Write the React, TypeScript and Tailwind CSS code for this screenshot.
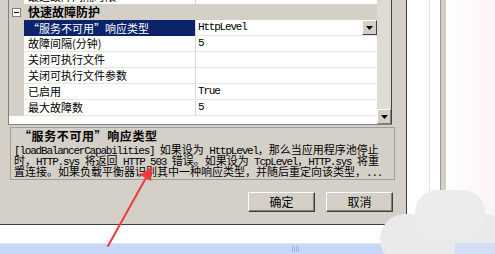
const cjk = "font-['Noto_Sans_CJK_SC',sans-serif]";

const A = ({ children }: { children: React.ReactNode }) => (
    <span className="font-['Liberation_Mono',monospace] tracking-[-1.2px] whitespace-pre">{children}</span>
);

const properties = [
    { id: 1, name: "“服务不可用”响应类型", value: "HttpLevel", selected: true },
    { id: 2, name: "故障间隔(分钟)", value: "5" },
    { id: 3, name: "关闭可执行文件", value: "" },
    { id: 4, name: "关闭可执行文件参数", value: "" },
    { id: 5, name: "已启用", value: "True" },
    { id: 6, name: "最大故障数", value: "5" },
];

const Arrow = () => (
    <svg width="7" height="4" viewBox="0 0 7 4">
        <path d="M0 0 L7 0 L3.5 4 Z" fill="#000" />
    </svg>
);

const Button = ({ label }: { label: string }) => (
    <div className="w-[67px] h-[20px] flex items-center justify-center bg-[#d4d0c8] border border-t-white border-l-white border-r-[#404040] border-b-[#404040] shadow-[inset_-1px_-1px_0_#808080] text-[12px]">
        {label}
    </div>
);

const PropertyGrid = () => (
    <div className="flex w-[384px] h-[125px] border-l border-b border-[#808080] bg-white">
        <div className="flex flex-col w-[369px]">
            {/* row above, mostly scrolled away */}
            <div className="h-[4px] overflow-hidden flex">
                <div className="w-[15px] bg-[#d4d0c8]" />
                <div className="w-[172px] border-r border-[#d8d8d8] overflow-hidden">
                    <div className="mt-[-11px] pl-[4px] leading-[15px]">最近故障间隔时限</div>
                </div>
            </div>
            <div className="h-[16px] flex items-center bg-[#d4d0c8]">
                <div className="w-[15px] flex justify-center">
                    <div className="w-[9px] h-[9px] border border-[#808080] bg-white flex items-center justify-center">
                        <div className="w-[5px] h-[1px] bg-black" />
                    </div>
                </div>
                <span className="ml-[4px] text-[12px] font-bold leading-none">快速故障防护</span>
            </div>
            {properties.map((p) => (
                <div key={p.id} className="h-[16px] flex">
                    <div className="w-[15px] bg-[#d4d0c8]" />
                    <div
                        className={`w-[172px] flex items-center pl-[4px] border-r border-[#d8d8d8] ${
                            p.selected ? "bg-[#0a246a] text-white" : "border-b border-b-[#e4e4e4]"
                        }`}
                    >
                        {p.name}
                    </div>
                    <div className="flex-1 flex items-center pl-[2px] border-b border-[#e4e4e4]">
                        <A>{p.value}</A>
                        {p.selected && (
                            <div className="ml-auto w-[15px] h-[15px] flex items-center justify-center bg-[#d4d0c8] border border-t-white border-l-white border-r-[#404040] border-b-[#404040]">
                                <Arrow />
                            </div>
                        )}
                    </div>
                </div>
            ))}
        </div>
        <div className="w-[15px] flex flex-col justify-end bg-[#dedbd5] border-r border-[#404040]">
            <div className="h-[15px] flex items-center justify-center bg-[#d4d0c8] border border-t-white border-l-white border-r-[#808080] border-b-[#808080]">
                <Arrow />
            </div>
        </div>
    </div>
);

const Description = () => (
    <div className="ml-[2px] mt-[2px] w-[385px] h-[53px] border border-[#a0a09a] pl-[3px] overflow-hidden whitespace-nowrap">
        <div className="h-[16px] pl-[5px] text-[12px] font-bold leading-[16px] tracking-[0.6px]">“服务不可用”响应类型</div>
        <div className="text-[11px]">
            <div className="h-[11px] leading-[11px]">
                <A>[loadBalancerCapabilities] </A>如果设为<A> HttpLevel</A>，那么当应用程序池停止
            </div>
            <div className="h-[11px] leading-[11px]">
                时，<A>HTTP.sys </A>将返回<A> HTTP 503 </A>错误。如果设为<A> TcpLevel</A>，<A>HTTP.sys </A>将重
            </div>
            <div className="h-[11px] leading-[11px]">置连接。如果负载平衡器识别其中一种响应类型，并随后重定向该类型，<A>...</A></div>
        </div>
    </div>
);

const App = () => {
    return (
        <div className={`relative w-[495px] h-[254px] overflow-hidden bg-white text-[11px] text-black ${cjk}`}>
            <div className="flex h-[225px]">
                <div className="w-[407px] flex flex-col bg-[#d4d0c8] border-r border-b border-[#404040] pl-[8px]">
                    <PropertyGrid />
                    <Description />
                    <div className="flex justify-end gap-[11px] mt-[12px] pr-[13px]">
                        <Button label="确定" />
                        <Button label="取消" />
                    </div>
                </div>
                <div className="w-[23px] bg-white border-r border-[#e4e4e4]" />
                <div className="w-[10px] bg-white" />
                <div className="w-[6px] bg-[#d4d0c8] border-l border-[#9a9a9a]" />
                <div className="flex-1 bg-gradient-to-r from-white to-[#fbf3f6]" />
            </div>
            <div className="h-[18px] bg-white" />
            <div className="h-[11px] bg-[#c8d7f7] border-t border-[#dbe5fa] flex items-center pl-[292px]">
                <div className="flex gap-[1px]">
                    <div className="w-[1px] h-[6px] bg-[#9fb4e0]" />
                    <div className="w-[1px] h-[6px] bg-[#9fb4e0]" />
                    <div className="w-[1px] h-[6px] bg-[#9fb4e0]" />
                    <div className="w-[1px] h-[6px] bg-[#9fb4e0]" />
                </div>
            </div>

            {/* blurred patch bottom right */}
            <div className="absolute left-[380px] top-[214px] w-[130px] h-[50px] rounded-[26px] bg-[#eaeaea]" />
            <div className="absolute left-[415px] top-[190px] w-[70px] h-[50px] rounded-[22px] bg-[#ececec]" />
            <div className="absolute left-[455px] top-[243px] w-[40px] h-[11px] bg-[#d3ddf3]" />

            {/* red annotation arrow */}
            <svg className="absolute left-0 top-0 pointer-events-none" width="495" height="254">
                <line x1="108" y1="246" x2="147" y2="176" stroke="#f03a3a" strokeWidth="2" strokeLinecap="round" />
                <path d="M152 166 L151 181 L140 175 Z" fill="#f03a3a" />
            </svg>
        </div>
    );
};

export default App;
